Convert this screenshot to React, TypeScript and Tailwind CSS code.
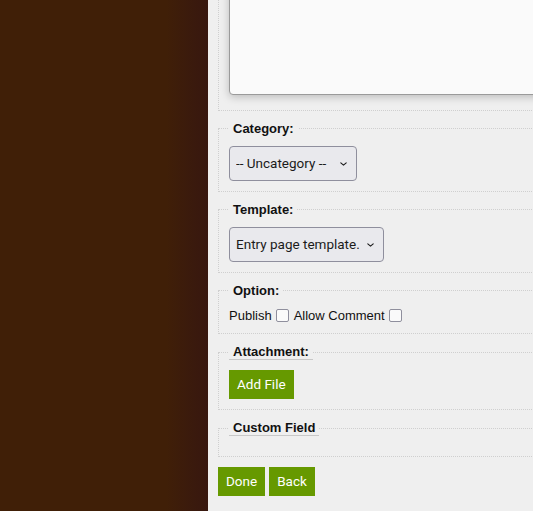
import { ChangeEvent, useState } from 'react';

function Chevron() {
  return (
    <svg
      className="absolute right-[10px] top-1/2 -translate-y-1/2 pointer-events-none"
      width="7"
      height="4"
      viewBox="0 0 7 4"
      fill="none"
    >
      <path d="M0.8 0.8l2.7 2.4 2.7-2.4" stroke="#1b1b1b" strokeWidth="1.1" strokeLinecap="round" strokeLinejoin="round" />
    </svg>
  );
}

function Select({ options, width }: { options: string[]; width: string }) {
  const [value, setValue] = useState(options[0]);
  return (
    <div className={`relative inline-block ${width}`}>
      <select
        value={value}
        onChange={(e: ChangeEvent<HTMLSelectElement>) => setValue(e.target.value)}
        className="appearance-none block w-full h-[35px] pl-[6px] pr-[18px] rounded-[4px] border border-[#8f8f9d] bg-[#e9e9ed] text-[13.5px] text-[#1b1b1b] font-['Roboto',sans-serif] outline-none"
      >
        {options.map((o) => (
          <option key={o}>{o}</option>
        ))}
      </select>
      <Chevron />
    </div>
  );
}

function Section({
  title,
  underline,
  children,
}: {
  title: string;
  underline?: boolean;
  children?: React.ReactNode;
}) {
  return (
    <fieldset className="mb-[10px] border border-dotted border-[#cfcfcf] px-[10px] pb-[10px] pt-[10px]">
      <legend
        className={`px-[4px] text-[13px] leading-[15px] font-bold text-[#111] font-['Liberation_Sans',Arial,sans-serif] ${
          underline ? 'border-b border-[#c8c8c8]' : ''
        }`}
      >
        {title}
      </legend>
      {children}
    </fieldset>
  );
}

const btn =
  "h-[29px] px-[8px] bg-[#669900] text-white text-[13.5px] leading-[29px] font-['Roboto',sans-serif]";

export default function App() {
  const [publish, setPublish] = useState(false);
  const [comment, setComment] = useState(false);

  return (
    <div className="flex w-[533px] h-[511px] overflow-hidden bg-[#401f07]">
      {/* backdrop with the panel's shadow */}
      <div className="w-[208px] shrink-0 flex">
        <div className="flex-1" />
        <div className="w-[42px] bg-gradient-to-r from-[#401f07] to-[#37170f]" />
      </div>

      {/* editor panel */}
      <div className="w-[700px] shrink-0 bg-[#efefef] pl-[10px] -mt-[120px]">
        <fieldset className="mb-[10px] border border-dotted border-[#cfcfcf] px-[10px] pt-[10px] pb-[15px]">
          <textarea
            className="block w-[620px] h-[204px] resize-none rounded-[4px] border border-[#9a9a9a] bg-[#fafafa] shadow-[0_2px_8px_rgba(0,0,0,0.22)] outline-none"
            defaultValue=""
          />
        </fieldset>

        <Section title="Category:">
          <Select options={['-- Uncategory --']} width="w-[128px]" />
        </Section>

        <Section title="Template:">
          <Select options={['Entry page template.']} width="w-[155px]" />
        </Section>

        <Section title="Option:">
          <div className="flex items-center h-[15px] text-[13px] text-[#111] font-['Liberation_Sans',Arial,sans-serif]">
            <span>Publish</span>
            <input
              type="checkbox"
              checked={publish}
              onChange={() => setPublish(!publish)}
              className="appearance-none ml-[4px] w-[13px] h-[13px] rounded-[2px] border border-[#8f8f9d] bg-[#fafafa]"
            />
            <span className="ml-[5px]">Allow Comment</span>
            <input
              type="checkbox"
              checked={comment}
              onChange={() => setComment(!comment)}
              className="appearance-none ml-[4px] w-[13px] h-[13px] rounded-[2px] border border-[#8f8f9d] bg-[#fafafa]"
            />
          </div>
        </Section>

        <Section title="Attachment:" underline>
          <button className={btn}>Add File</button>
        </Section>

        <Section title="Custom Field" underline />

        <div className="flex gap-[4px]">
          <button className={btn}>Done</button>
          <button className={btn}>Back</button>
        </div>
      </div>
    </div>
  );
}
